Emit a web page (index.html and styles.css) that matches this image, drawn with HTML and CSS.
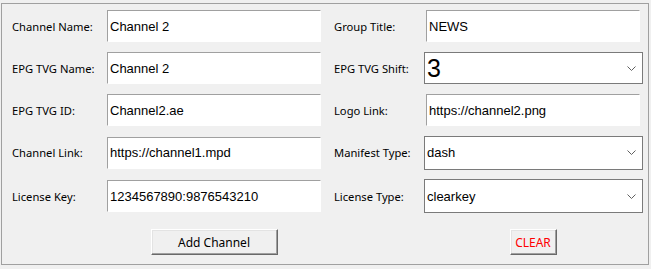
FILE: index.html
```html
<!DOCTYPE html>
<html lang="en">
  <head>
    <meta charset="UTF-8" />
    <title>Add Channel</title>
    <link rel="stylesheet" href="styles.css">
  </head>
  <body>
    <div class="panel">
      <div class="form">
        <!-- row 1 -->
        <label class="label">Channel Name:</label>
        <input class="entry" type="text" value="Channel 2" />
        <label class="label label-right">Group Title:</label>
        <input class="entry" type="text" value="NEWS" />

        <!-- row 2 -->
        <label class="label">EPG TVG Name:</label>
        <input class="entry" type="text" value="Channel 2" />
        <label class="label label-right">EPG TVG Shift:</label>
        <div class="combo">
          <span class="combo-value big">3</span>
          <svg class="chevron" width="9" height="5" viewBox="0 0 9 5"><polyline points="0.5,0.5 4.5,4.5 8.5,0.5" fill="none" stroke="#606060" stroke-width="1" /></svg>
        </div>

        <!-- row 3 -->
        <label class="label">EPG TVG ID:</label>
        <input class="entry" type="text" value="Channel2.ae" />
        <label class="label label-right">Logo Link:</label>
        <input class="entry" type="text" value="https://channel2.png" />

        <!-- row 4 -->
        <label class="label">Channel Link:</label>
        <input class="entry" type="text" value="https://channel1.mpd" />
        <label class="label label-right">Manifest Type:</label>
        <div class="combo tall">
          <span class="combo-value">dash</span>
          <svg class="chevron" width="9" height="5" viewBox="0 0 9 5"><polyline points="0.5,0.5 4.5,4.5 8.5,0.5" fill="none" stroke="#606060" stroke-width="1" /></svg>
        </div>

        <!-- row 5 -->
        <label class="label">License Key:</label>
        <input class="entry" type="text" value="1234567890:9876543210" />
        <label class="label label-right">License Type:</label>
        <div class="combo tall">
          <span class="combo-value">clearkey</span>
          <svg class="chevron" width="9" height="5" viewBox="0 0 9 5"><polyline points="0.5,0.5 4.5,4.5 8.5,0.5" fill="none" stroke="#606060" stroke-width="1" /></svg>
        </div>

        <!-- buttons -->
        <button class="btn btn-add">Add Channel</button>
        <button class="btn btn-clear">CLEAR</button>
      </div>
    </div>
  </body>
</html>
```

FILE: styles.css
```css
body {
  margin: 0;
  background-color: #f0f0f0;
  font-family: "Noto Sans", "Open Sans", sans-serif;
  color: #000;
}
.panel {
  margin: 3px 0 0 1px;
  width: 646px;
  height: 260px;
  border: 1px solid #a0a0a0;
}
.form {
  display: grid;
  grid-template-columns: 95px 214px 105px 214px;
  grid-template-rows: 42px 42px 42px 43px 44px 37px;
  padding: 1px 0 0 10px;
}
.label {
  align-self: center;
  font-size: 11.2px;
  white-space: nowrap;
}
.label-right {
  padding-left: 13px;
}
.entry {
  align-self: center;
  box-sizing: border-box;
  width: 214px;
  height: 32px;
  margin: 0;
  padding: 0 2px;
  border: 1px solid #fff;
  border-top-color: #a0a0a0;
  border-left-color: #a0a0a0;
  background: #fff;
  font-family: "Liberation Sans", Arial, sans-serif;
  font-size: 13px;
  color: #000;
  outline: none;
}
.combo {
  align-self: center;
  box-sizing: border-box;
  display: flex;
  align-items: center;
  justify-content: space-between;
  width: 219px;
  height: 32px;
  margin-left: -2px;
  padding: 0 6px 0 2px;
  border: 1px solid #7a7a7a;
  background: #fff;
}
.combo.tall {
  height: 34px;
}
.combo-value {
  font-family: "Liberation Sans", Arial, sans-serif;
  font-size: 13px;
}
.combo-value.big {
  font-size: 25px;
}
.btn {
  grid-row: 6;
  align-self: end;
  justify-self: center;
  box-sizing: border-box;
  height: 26px;
  padding: 0;
  background: #f0f0f0;
  border: 1px solid;
  border-color: #fff #696969 #696969 #fff;
  box-shadow: inset -1px -1px #a0a0a0, inset 1px 1px #e3e3e3;
  font-family: "Noto Sans", "Open Sans", sans-serif;
  font-size: 12px;
  cursor: pointer;
}
.btn-add {
  grid-column: 2;
  width: 127px;
  color: #000;
}
.btn-clear {
  grid-column: 4;
  width: 47px;
  color: #ff0000;
}
```
